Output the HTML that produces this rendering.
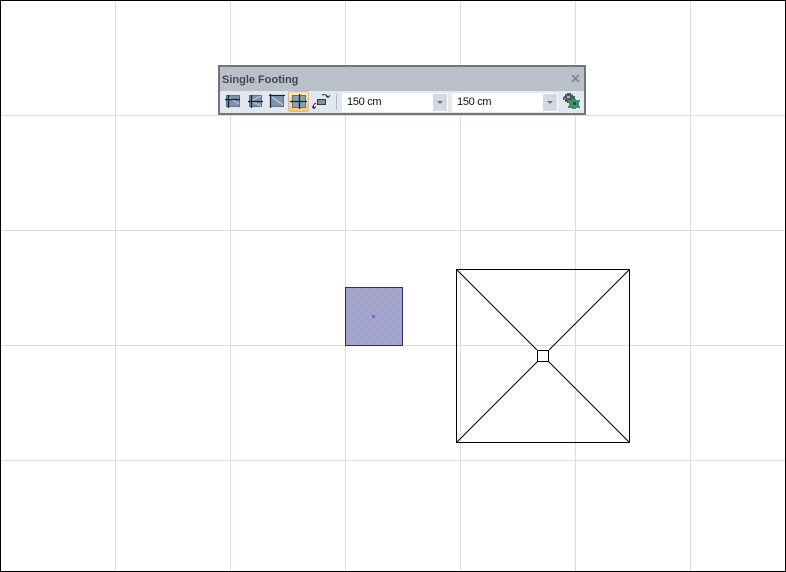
<!DOCTYPE html>
<html>
<head>
<meta charset="utf-8">
<style>
html,body{margin:0;padding:0;background:#fff;}
body{width:786px;height:572px;position:relative;overflow:hidden;font-family:"Liberation Sans",sans-serif;}
.abs{position:absolute;}
#tb{left:218px;top:65px;width:364px;height:47px;border:2px solid #747474;background:#e3e8f0;}
#title{left:0;top:0;width:364px;height:24px;background:#b9c0ca;}
#title span{position:absolute;left:2px;top:6px;font-size:11px;font-weight:bold;color:#43474f;line-height:14px;}
.combo{background:#fff;height:19px;top:26px;width:106px;}
.combo span{position:absolute;left:5px;top:2px;font-size:11px;letter-spacing:-.3px;line-height:15px;color:#111;}
.btn{top:27px;width:14px;height:17px;background:#d3d8e2;}
.btn:after{content:"";position:absolute;left:4px;top:7px;border:3px solid transparent;border-top:3px solid #70747c;border-bottom:0;}
</style>
</head>
<body>
<svg class="abs" style="left:0;top:0" width="786" height="572" shape-rendering="crispEdges">
<rect x="0.5" y="0.5" width="785" height="571" fill="#fff" stroke="#000"/>
<g stroke="#dcdce9" stroke-width="1">
<path d="M115.5 1V571M230.5 1V571M345.5 1V571M460.5 1V571M575.5 1V571M690.5 1V571"/>
<path d="M1 115.5H785M1 230.5H785M1 345.5H785M1 460.5H785"/>
</g>
<defs>
<pattern id="p" width="8" height="8" patternUnits="userSpaceOnUse">
<rect width="8" height="8" fill="#a3a3d0"/>
<rect x="0" y="7" width="1" height="1" fill="#b0b2c2"/><rect x="2" y="5" width="1" height="1" fill="#b0b2c2"/>
<rect x="4" y="3" width="1" height="1" fill="#b0b2c2"/><rect x="6" y="1" width="1" height="1" fill="#b0b2c2"/>
<rect x="1" y="6" width="1" height="1" fill="#aaabc8"/><rect x="3" y="4" width="1" height="1" fill="#aaabc8"/>
<rect x="5" y="2" width="1" height="1" fill="#aaabc8"/><rect x="7" y="0" width="1" height="1" fill="#aaabc8"/>
<rect x="1" y="1" width="1" height="1" fill="#aeb0c4"/><rect x="5" y="5" width="1" height="1" fill="#aeb0c4"/>
</pattern>
</defs>
<rect x="345.5" y="287.5" width="57" height="58" fill="url(#p)" stroke="#28287e"/>
<rect x="372" y="315" width="3" height="3" fill="#8f5fd0"/>
<rect x="456.5" y="269.5" width="173" height="173" fill="none" stroke="#000"/>
<path d="M457 270L537 350M629 270L549 350M457 442L537 362M629 442L549 362" stroke="#000" stroke-width="1"/>
<rect x="537.5" y="350.5" width="11" height="11" fill="#fff" stroke="#000"/>
</svg>

<div id="tb" class="abs" style="height:46px">
  <div id="title" class="abs"><span>Single Footing</span>
    <svg class="abs" style="left:351px;top:7px" width="10" height="10"><path d="M1 1L8 8M8 1L1 8" stroke="#82868c" stroke-width="1.7" fill="none"/></svg>
  </div>
  <svg class="abs" style="left:0;top:24px" width="120" height="22">
    <defs>
      <linearGradient id="g" x1="0" y1="0" x2="0" y2="1"><stop offset="0" stop-color="#fde6bc"/><stop offset="1" stop-color="#fcc66c"/></linearGradient>
    </defs>
    <rect x="6.5" y="4.500" width="13" height="11" fill="#7f94ab" stroke="#5e738a"/>
    <path d="M8 6L19 13" stroke="#c2cfda" fill="none"/>
    <path d="M5 8.500H20" stroke="#10243a" stroke-width="1.300"/><path d="M8.500 4V17" stroke="#10243a" stroke-width="1.300"/>
    <rect x="29.500" y="4.500" width="12" height="11" fill="#7f94ab" stroke="#5e738a"/>
    <path d="M31 10L41 5M31 10L41 15" stroke="#c2cfda" fill="none"/>
    <path d="M28 10.500H43" stroke="#10243a" stroke-width="1.300"/><path d="M31.500 4V17" stroke="#10243a" stroke-width="1.300"/>
    <rect x="50.500" y="4.500" width="13" height="11" fill="#7f94ab" stroke="#5e738a"/>
    <path d="M52 6L63 14" stroke="#d3dce4" fill="none"/>
    <path d="M49 4.500H65" stroke="#10243a" stroke-width="1.200"/><path d="M50.500 3V17" stroke="#10243a" stroke-width="1.200"/>
    <rect x="68.500" y="0.500" width="20" height="20" rx="2" fill="url(#g)" stroke="#c8bca4"/>
    <rect x="72.500" y="4.500" width="13" height="12" fill="#8ca0b4" stroke="#5e738a"/>
    <path d="M70 10.500H87" stroke="#10243a" stroke-width="1.300"/><path d="M79.500 3V18" stroke="#10243a" stroke-width="1.300"/>
    <rect x="97.500" y="8.500" width="8" height="5" fill="#7f93a8" stroke="#24384e"/>
    <path d="M96 12C93.500 13 93 14.500 94 17.500M92 15.500L94 17.500L96 15.500" stroke="#18283a" fill="none"/>
    <path d="M102 4C105 3 107 4 108 6.500M106 5L108 6.500L110 4.500" stroke="#18283a" fill="none"/>
    <path d="M116.500 3V19" stroke="#b4b9c1"/>
  </svg>
  <div class="abs combo" style="left:122px;"><span>150 cm</span></div>
  <div class="abs btn" style="left:213px;"></div>
  <div class="abs combo" style="left:232px;"><span>150 cm</span></div>
  <div class="abs btn" style="left:323px;"></div>
  <svg class="abs" style="left:341px;top:25px" width="22" height="21" shape-rendering="crispEdges">
    <g fill="#4c5a6a">
      <rect x="4" y="2" width="8" height="8"/><rect x="6" y="1" width="4" height="10"/><rect x="3" y="4" width="10" height="4"/>
      <rect x="2" y="5" width="1" height="3"/><rect x="13" y="4" width="1" height="3"/>
    </g>
    <rect x="6" y="4" width="3" height="2" fill="#aab4c0"/><rect x="3" y="6" width="2" height="1" fill="#8f9aa8"/><rect x="10" y="2" width="2" height="1" fill="#8f9aa8"/>
    <g fill="#3f9068">
      <rect x="9" y="8" width="8" height="8"/><rect x="11" y="7" width="4" height="10"/><rect x="8" y="10" width="10" height="4"/>
      <rect x="7" y="8" width="2" height="2"/><rect x="17" y="8" width="2" height="2"/><rect x="7" y="14" width="2" height="2"/><rect x="17" y="14" width="2" height="2"/>
    </g>
    <rect x="12" y="10" width="3" height="3" fill="#1f5a40"/>
  </svg>
</div>
</body>
</html>
